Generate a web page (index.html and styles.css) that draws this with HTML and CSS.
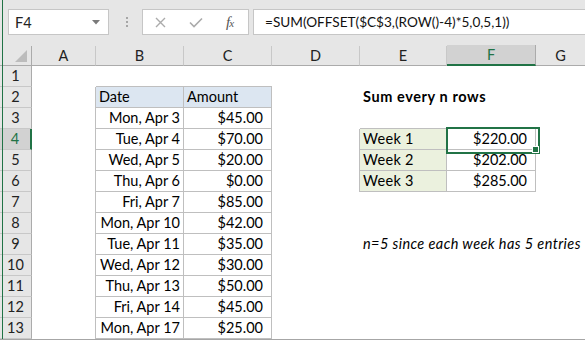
FILE: index.html
```html
<!DOCTYPE html>
<html>
<head>
<meta charset="utf-8">
<link rel="stylesheet" href="styles.css">
</head>
<body>
<div class="app">
  <div class="fbar">
    <div class="namebox"><span>F4</span><svg class="caret" width="8" height="5" viewBox="0 0 8 5"><polygon points="0,0 8,0 4,4.5" fill="#7a7a7a"/></svg></div>
    <div class="grip"><i></i><i></i><i></i></div>
    <div class="fxbox">
      <svg class="ic-x" width="11" height="11" viewBox="0 0 11 11"><path d="M1 1 L10 10 M10 1 L1 10" stroke="#ababab" stroke-width="1.4" fill="none"/></svg>
      <svg class="ic-ok" width="14" height="11" viewBox="0 0 14 11"><path d="M1 5.5 L5 9.5 L13 1.5" stroke="#ababab" stroke-width="1.6" fill="none"/></svg>
      <span class="fx">f<small>x</small></span>
    </div>
    <div class="formula">=SUM(OFFSET($C$3,(ROW()-4)*5,0,5,1))</div>
  </div>
  <div class="colhead">
    <div class="corner"><svg width="12" height="12" viewBox="0 0 12 12"><polygon points="12,0 12,12 0,12" fill="#bcbcbc"/></svg></div>
    <div>A</div><div>B</div><div>C</div><div>D</div><div>E</div><div class="sel">F</div><div class="last">G</div>
  </div>
  <div class="grid">
    <div class="rh">1</div><div class="c"></div><div class="c bb"></div><div class="c bb"></div><div class="c"></div><div class="c"></div><div class="c"></div><div class="c"></div>
    <div class="rh">2</div><div class="c br"></div><div class="c g hd">Date</div><div class="c g hd">Amount</div><div class="c"></div><div class="c b">Sum every n rows</div><div class="c"></div><div class="c"></div>
    <div class="rh">3</div><div class="c br"></div><div class="c g r">Mon, Apr 3</div><div class="c g r cur">$45.00</div><div class="c"></div><div class="c bb"></div><div class="c bb"></div><div class="c"></div>
    <div class="rh sel">4</div><div class="c br"></div><div class="c g r">Tue, Apr 4</div><div class="c g r cur">$70.00</div><div class="c br"></div><div class="c g wk">Week 1</div><div class="c g r cur active">$220.00<span class="handle"></span></div><div class="c"></div>
    <div class="rh">5</div><div class="c br"></div><div class="c g r">Wed, Apr 5</div><div class="c g r cur">$20.00</div><div class="c br"></div><div class="c g wk">Week 2</div><div class="c g r cur">$202.00</div><div class="c"></div>
    <div class="rh">6</div><div class="c br"></div><div class="c g r">Thu, Apr 6</div><div class="c g r cur">$0.00</div><div class="c br"></div><div class="c g wk">Week 3</div><div class="c g r cur">$285.00</div><div class="c"></div>
    <div class="rh">7</div><div class="c br"></div><div class="c g r">Fri, Apr 7</div><div class="c g r cur">$85.00</div><div class="c"></div><div class="c"></div><div class="c"></div><div class="c"></div>
    <div class="rh">8</div><div class="c br"></div><div class="c g r">Mon, Apr 10</div><div class="c g r cur">$42.00</div><div class="c"></div><div class="c"></div><div class="c"></div><div class="c"></div>
    <div class="rh">9</div><div class="c br"></div><div class="c g r">Tue, Apr 11</div><div class="c g r cur">$35.00</div><div class="c"></div><div class="c i">n=5 since each week has 5 entries</div><div class="c"></div><div class="c"></div>
    <div class="rh">10</div><div class="c br"></div><div class="c g r">Wed, Apr 12</div><div class="c g r cur">$30.00</div><div class="c"></div><div class="c"></div><div class="c"></div><div class="c"></div>
    <div class="rh">11</div><div class="c br"></div><div class="c g r">Thu, Apr 13</div><div class="c g r cur">$50.00</div><div class="c"></div><div class="c"></div><div class="c"></div><div class="c"></div>
    <div class="rh">12</div><div class="c br"></div><div class="c g r">Fri, Apr 14</div><div class="c g r cur">$45.00</div><div class="c"></div><div class="c"></div><div class="c"></div><div class="c"></div>
    <div class="rh">13</div><div class="c br"></div><div class="c g r">Mon, Apr 17</div><div class="c g r cur">$25.00</div><div class="c"></div><div class="c"></div><div class="c"></div><div class="c"></div>
  </div>
</div>
</body>
</html>
```
FILE: styles.css
```css
* { box-sizing: border-box; }
:root { --cols: 32px 64px 88px 88px 88px 87px 89px 49px; }
body {
  margin: 0;
  width: 585px;
  height: 340px;
  overflow: hidden;
  background: #fff;
  font-family: Lato, "Liberation Sans", sans-serif;
  font-size: 14.5px;
  color: #000;
}
.app {
  position: relative;
  height: 340px;
  background: #e6e6e6;
  border-bottom: 1px solid #a6a6a6;
}
.app::before {
  content: "";
  position: absolute;
  left: 2px;
  top: 0;
  bottom: 0;
  width: 1px;
  background: #217346;
  z-index: 5;
}
.fbar {
  height: 44px;
  display: flex;
  align-items: flex-start;
  padding-top: 9px;
  padding-left: 8px;
}
.namebox {
  width: 101px;
  height: 26px;
  background: #fff;
  border: 1px solid #c6c6c6;
  display: flex;
  align-items: center;
  justify-content: space-between;
  padding: 0 8px 0 6px;
  color: #222;
}
.grip {
  width: 33px;
  height: 26px;
  display: flex;
  flex-direction: column;
  align-items: center;
  gap: 2px;
  padding-top: 8px;
  padding-left: 2px;
}
.grip i {
  width: 2px;
  height: 2px;
  background: #a6a6a6;
}
.fxbox {
  width: 107px;
  height: 26px;
  background: #fff;
  border: 1px solid #c6c6c6;
  display: flex;
  align-items: center;
  padding-left: 12px;
}
.ic-ok { margin-left: 23px; }
.fx {
  margin-left: 23px;
  font-family: "Liberation Serif", serif;
  font-style: italic;
  font-size: 15px;
  color: #555;
  letter-spacing: -1px;
}
.fx small { font-size: 11px; }
.formula {
  flex: 1;
  margin-left: 4px;
  height: 26px;
  background: #fff;
  border: 1px solid #c6c6c6;
  border-right: none;
  padding-left: 11px;
  line-height: 24px;
  font-size: 13.6px;
  white-space: nowrap;
  color: #111;
}
.colhead {
  display: grid;
  grid-template-columns: var(--cols);
  height: 22px;
  align-items: end;
}
.colhead > div {
  height: 20px;
  border-right: 1px solid #c8c8c8;
  border-bottom: 1px solid #ababab;
  text-align: center;
  line-height: 19px;
  color: #222;
}
.colhead > .corner {
  border-right-color: #ababab;
  display: flex;
  justify-content: flex-end;
  align-items: flex-end;
  padding: 0 4px 3px 0;
}
.colhead > .sel {
  height: 21px;
  background: #d2d2d2;
  border-right-color: #ababab;
  border-bottom: 2px solid #217346;
  color: #217346;
  line-height: 20px;
}
.colhead > .last { border-right: none; }
.grid {
  display: grid;
  grid-template-columns: var(--cols);
  grid-auto-rows: 21px;
  background: #fff;
}
.rh {
  background: #e6e6e6;
  border-right: 1px solid #ababab;
  border-bottom: 1px solid #c8c8c8;
  text-align: center;
  line-height: 20px;
  color: #222;
}
.rh.sel {
  background: #d2d2d2;
  border-right: 2px solid #217346;
  color: #217346;
}
.c {
  line-height: 20px;
  white-space: nowrap;
  padding: 0 3px;
}
.r { text-align: right; }
.cur { padding-right: 8px; }
.g {
  border-right: 1px solid #bfbfbf;
  border-bottom: 1px solid #bfbfbf;
}
.bb { border-bottom: 1px solid #bfbfbf; }
.br { border-right: 1px solid #bfbfbf; }
.hd { background: #dce6f1; }
.wk { background: #ebf1de; letter-spacing: 0.3px; }
.b { font-weight: 700; letter-spacing: 0.6px; }
.i { font-style: italic; letter-spacing: 0.4px; }
.active { position: relative; }
.active::after {
  content: "";
  position: absolute;
  left: -1px;
  top: -2px;
  width: 90px;
  height: 23px;
  border: 2px solid #217346;
}
.handle {
  position: absolute;
  left: 85px;
  top: 17px;
  width: 7px;
  height: 7px;
  background: #217346;
  border: 1px solid #fff;
  z-index: 2;
}
```
